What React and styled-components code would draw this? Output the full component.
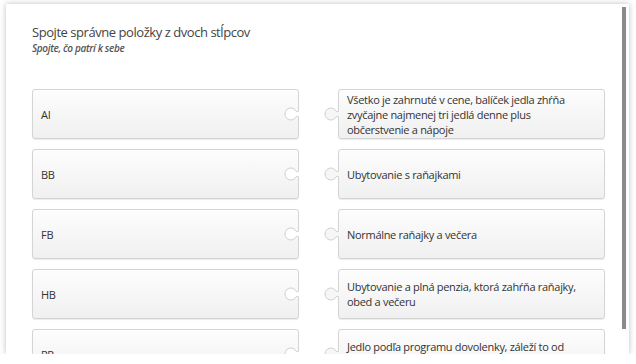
import styled, { createGlobalStyle } from "styled-components";

const pairs = [
  { left: "AI", right: "Všetko je zahrnuté v cene, balíček jedla zhŕňa zvyčajne najmenej tri jedlá denne plus občerstvenie a nápoje" },
  { left: "BB", right: "Ubytovanie s raňajkami" },
  { left: "FB", right: "Normálne raňajky a večera" },
  { left: "HB", right: "Ubytovanie a plná penzia, ktorá zahŕňa raňajky, obed a večeru" },
  { left: "PP", right: "Jedlo podľa programu dovolenky, záleží to od cestovnej kancelárie" },
];

const Notch = () => (
  <NotchSvg width="15" height="16" viewBox="0 0 15 16">
    <path d="M15,5.5 L12.4,5.5 A6,6 0 1 0 12.4,10.5 L15,10.5 Z" fill="#fff" stroke="none" />
    <path d="M14,5.5 L12.4,5.5 A6,6 0 1 0 12.4,10.5 L14,10.5" fill="none" stroke="#cfcfcf" />
  </NotchSvg>
);

const Tab = () => (
  <TabSvg width="15" height="16" viewBox="0 0 15 16">
    <path d="M15,5.5 L12.4,5.5 A6,6 0 1 0 12.4,10.5 L15,10.5 Z" fill="#f6f6f6" stroke="none" />
    <path d="M14,5.5 L12.4,5.5 A6,6 0 1 0 12.4,10.5 L14,10.5" fill="none" stroke="#cfcfcf" />
  </TabSvg>
);

export default function App() {
  return (
    <>
      <GlobalStyle />
      <Panel>
        <Title>Spojte správne položky z dvoch stĺpcov</Title>
        <Subtitle>Spojte, čo patrí k sebe</Subtitle>
        <Grid>
          {pairs.map(({ left, right }) => (
            <Row key={left}>
              <Item>
                {left}
                <Notch />
              </Item>
              <Item>
                <Tab />
                {right}
              </Item>
            </Row>
          ))}
        </Grid>
        <ScrollThumb />
      </Panel>
    </>
  );
}

const GlobalStyle = createGlobalStyle`
  body {
    margin: 0;
    background: #fff;
    font-family: "Open Sans", "DejaVu Sans", sans-serif;
  }
`;

const Panel = styled.div`
  position: relative;
  margin: 4px 7px 0 6px;
  height: 350px;
  box-sizing: border-box;
  padding: 19px 0 10px 26px;
  background: #fff;
  box-shadow: 0 0 6px rgba(0, 0, 0, 0.25);
  overflow: hidden;
`;

const ScrollThumb = styled.div`
  position: absolute;
  top: 3px;
  right: 3px;
  width: 4px;
  height: 322px;
  background: #8a8a8a;
`;

const Title = styled.h2`
  margin: 0;
  font-size: 13px;
  font-weight: 400;
  letter-spacing: -0.45px;
  line-height: 18px;
  color: #444;
`;

const Subtitle = styled.div`
  font-size: 10px;
  font-style: italic;
  font-weight: 600;
  letter-spacing: -0.35px;
  line-height: 14px;
  color: #555;
`;

const Grid = styled.div`
  margin-top: 34px;
  display: flex;
  flex-direction: column;
  gap: 10px;
  width: 573px;
`;

const Row = styled.div`
  display: grid;
  grid-template-columns: 267px 267px;
  justify-content: space-between;
`;

const Item = styled.div`
  position: relative;
  box-sizing: border-box;
  min-height: 50px;
  display: flex;
  align-items: center;
  padding: 1px 10px 1px 8px;
  border: 1px solid #d4d4d4;
  border-radius: 3px;
  background: linear-gradient(#fdfdfd, #f0f0f0);
  box-shadow: 0 1px 1px rgba(0, 0, 0, 0.08);
  font-size: 11px;
  letter-spacing: -0.3px;
  line-height: 15px;
  color: #333;
`;

const NotchSvg = styled.svg`
  position: absolute;
  right: -1px;
  top: 50%;
  margin-top: -8px;
`;

const TabSvg = styled.svg`
  position: absolute;
  left: -15px;
  top: 50%;
  margin-top: -8px;
`;
